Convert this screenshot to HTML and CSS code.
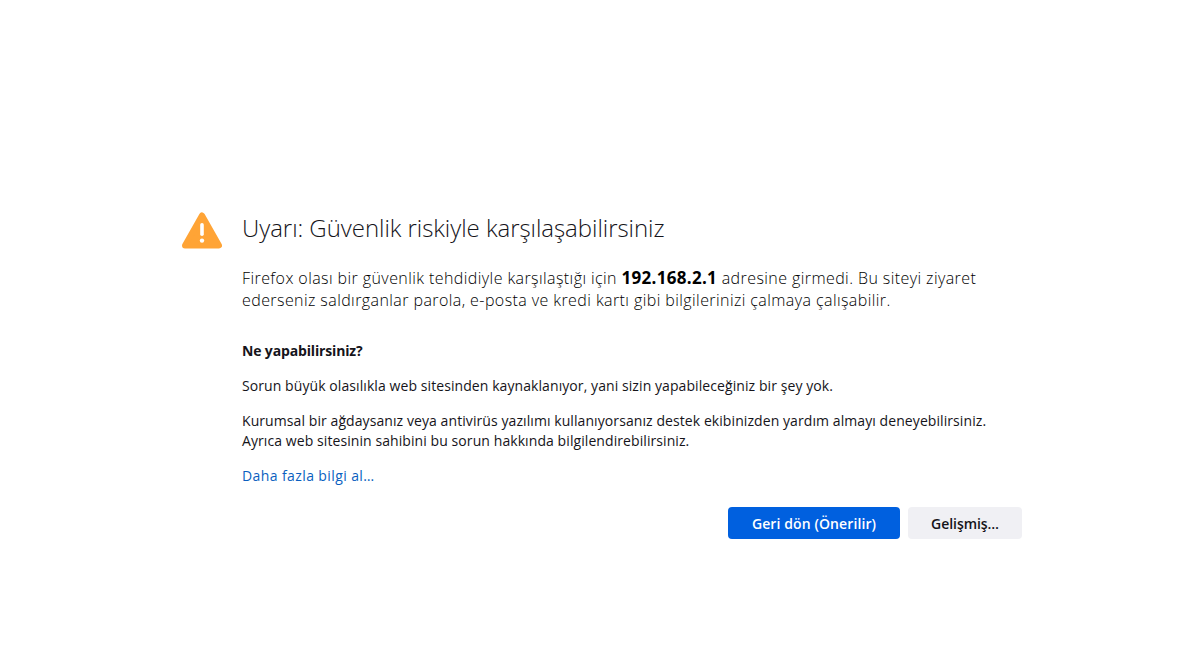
FILE: index.html
```html
<!DOCTYPE html>
<html lang="tr">
<head>
<meta charset="utf-8">
<title>Uyarı: Güvenlik riskiyle karşılaşabilirsiniz</title>
<link rel="stylesheet" href="styles.css">
</head>
<body>
<main class="page">
  <div class="icon-col">
    <svg class="warn" width="40" height="38" viewBox="0 0 40 38" aria-hidden="true">
      <path d="M20 3.5 L37 33.5 H3 Z" fill="#ffa436" stroke="#ffa436" stroke-width="6" stroke-linejoin="round"/>
      <rect x="18.2" y="11" width="3.6" height="13" rx="1.8" fill="#fff"/>
      <circle cx="20" cy="28.6" r="2.2" fill="#fff"/>
    </svg>
  </div>
  <div class="content">
    <h1 class="title">Uyarı: Güvenlik riskiyle karşılaşabilirsiniz</h1>
    <p class="intro">Firefox olası bir güvenlik tehdidiyle karşılaştığı için <b class="host">192.168.2.1</b> adresine girmedi. Bu siteyi ziyaret<br>ederseniz saldırganlar parola, e-posta ve kredi kartı gibi bilgilerinizi çalmaya çalışabilir.</p>
    <h2 class="subtitle">Ne yapabilirsiniz?</h2>
    <p class="text">Sorun büyük olasılıkla web sitesinden kaynaklanıyor, yani sizin yapabileceğiniz bir şey yok.</p>
    <p class="text">Kurumsal bir ağdaysanız veya antivirüs yazılımı kullanıyorsanız destek ekibinizden yardım almayı deneyebilirsiniz.<br>Ayrıca web sitesinin sahibini bu sorun hakkında bilgilendirebilirsiniz.</p>
    <p class="text"><a class="link" href="#">Daha fazla bilgi al…</a></p>
    <div class="actions">
      <button class="btn primary">Geri dön (Önerilir)</button>
      <button class="btn secondary">Gelişmiş…</button>
    </div>
  </div>
</main>
</body>
</html>
```
FILE: styles.css
```css
* { box-sizing: border-box; }
html, body { height: 100%; }
body {
  margin: 0;
  background: #fff;
  color: #15141a;
  font-family: "Open Sans", "Noto Sans", sans-serif;
  overflow: hidden;
}
.page {
  width: 840px;
  margin: 0 0 0 182px;
  padding-top: 211px;
  display: flex;
}
.icon-col { width: 60px; flex: none; padding-top: 1px; }
.warn { display: block; }
.content { flex: 1; min-width: 0; }
.title {
  margin: 0;
  font-size: 24px;
  line-height: 33px;
  font-weight: 300;
  letter-spacing: -0.05px;
}
.intro {
  margin: 23px 0 0;
  font-size: 16px;
  line-height: 22px;
  font-weight: 300;
  color: #000;
  letter-spacing: 0.42px;
}
.host { font-size: 17px; font-weight: 700; letter-spacing: 0.3px; line-height: 1; }
.subtitle {
  margin: 30px 0 0;
  font-size: 14px;
  line-height: 20px;
  font-weight: 700;
  letter-spacing: -0.15px;
}
.text {
  margin: 15px 0 0;
  font-size: 14px;
  line-height: 20px;
  letter-spacing: 0.08px;
}
.link { color: #0a5fc0; text-decoration: none; letter-spacing: 0.4px; }
.actions {
  margin-top: 21px;
  display: flex;
  justify-content: flex-end;
  gap: 8px;
}
.btn {
  height: 32px;
  border: 0;
  border-radius: 4px;
  font-family: inherit;
  font-size: 14px;
  font-weight: 600;
  letter-spacing: 0.1px;
}
.primary { width: 172px; background: #0060df; color: #fff; }
.secondary { width: 114px; background: #f0f0f4; color: #15141a; letter-spacing: -0.05px; }
```
